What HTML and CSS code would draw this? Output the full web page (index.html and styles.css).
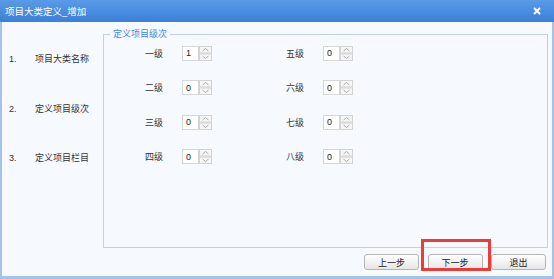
FILE: index.html
```html
<!DOCTYPE html>
<html lang="zh-CN">
<head>
    <meta charset="UTF-8">
    <title>项目大类定义_增加</title>
    <link rel="stylesheet" href="styles.css">
</head>
<body>
    <div class="window">
        <!-- Title bar -->
        <div class="titlebar">
            <span class="title">项目大类定义_增加</span>
            <svg class="close" width="8" height="8" viewBox="0 0 8 8"><path d="M1 1 L7 7 M7 1 L1 7" stroke="#fff" stroke-width="2"/></svg>
        </div>

        <div class="content">
            <!-- Wizard steps -->
            <ol class="steps">
                <li><span class="num">1.</span><span>项目大类名称</span></li>
                <li><span class="num">2.</span><span>定义项目级次</span></li>
                <li><span class="num">3.</span><span>定义项目栏目</span></li>
            </ol>

            <!-- Levels -->
            <fieldset class="levels">
                <legend>定义项目级次</legend>
                <div class="grid">
                    <div class="level"><label>一级</label><input type="text" value="1"><svg class="arrows" width="13" height="15" viewBox="0 0 13 15"><rect x="0.5" y="0.5" width="12" height="6.5" fill="#f6f6f6" stroke="#d2d2d2"/><rect x="0.5" y="8" width="12" height="6.5" fill="#f6f6f6" stroke="#d2d2d2"/><path d="M3.5 5 L6.5 2.5 L9.5 5 M3.5 10 L6.5 12.5 L9.5 10" fill="none" stroke="#999" stroke-width="0.8"/></svg></div>
                    <div class="level"><label>二级</label><input type="text" value="0"><svg class="arrows" width="13" height="15" viewBox="0 0 13 15"><rect x="0.5" y="0.5" width="12" height="6.5" fill="#f6f6f6" stroke="#d2d2d2"/><rect x="0.5" y="8" width="12" height="6.5" fill="#f6f6f6" stroke="#d2d2d2"/><path d="M3.5 5 L6.5 2.5 L9.5 5 M3.5 10 L6.5 12.5 L9.5 10" fill="none" stroke="#999" stroke-width="0.8"/></svg></div>
                    <div class="level"><label>三级</label><input type="text" value="0"><svg class="arrows" width="13" height="15" viewBox="0 0 13 15"><rect x="0.5" y="0.5" width="12" height="6.5" fill="#f6f6f6" stroke="#d2d2d2"/><rect x="0.5" y="8" width="12" height="6.5" fill="#f6f6f6" stroke="#d2d2d2"/><path d="M3.5 5 L6.5 2.5 L9.5 5 M3.5 10 L6.5 12.5 L9.5 10" fill="none" stroke="#999" stroke-width="0.8"/></svg></div>
                    <div class="level"><label>四级</label><input type="text" value="0"><svg class="arrows" width="13" height="15" viewBox="0 0 13 15"><rect x="0.5" y="0.5" width="12" height="6.5" fill="#f6f6f6" stroke="#d2d2d2"/><rect x="0.5" y="8" width="12" height="6.5" fill="#f6f6f6" stroke="#d2d2d2"/><path d="M3.5 5 L6.5 2.5 L9.5 5 M3.5 10 L6.5 12.5 L9.5 10" fill="none" stroke="#999" stroke-width="0.8"/></svg></div>
                    <div class="level"><label>五级</label><input type="text" value="0"><svg class="arrows" width="13" height="15" viewBox="0 0 13 15"><rect x="0.5" y="0.5" width="12" height="6.5" fill="#f6f6f6" stroke="#d2d2d2"/><rect x="0.5" y="8" width="12" height="6.5" fill="#f6f6f6" stroke="#d2d2d2"/><path d="M3.5 5 L6.5 2.5 L9.5 5 M3.5 10 L6.5 12.5 L9.5 10" fill="none" stroke="#999" stroke-width="0.8"/></svg></div>
                    <div class="level"><label>六级</label><input type="text" value="0"><svg class="arrows" width="13" height="15" viewBox="0 0 13 15"><rect x="0.5" y="0.5" width="12" height="6.5" fill="#f6f6f6" stroke="#d2d2d2"/><rect x="0.5" y="8" width="12" height="6.5" fill="#f6f6f6" stroke="#d2d2d2"/><path d="M3.5 5 L6.5 2.5 L9.5 5 M3.5 10 L6.5 12.5 L9.5 10" fill="none" stroke="#999" stroke-width="0.8"/></svg></div>
                    <div class="level"><label>七级</label><input type="text" value="0"><svg class="arrows" width="13" height="15" viewBox="0 0 13 15"><rect x="0.5" y="0.5" width="12" height="6.5" fill="#f6f6f6" stroke="#d2d2d2"/><rect x="0.5" y="8" width="12" height="6.5" fill="#f6f6f6" stroke="#d2d2d2"/><path d="M3.5 5 L6.5 2.5 L9.5 5 M3.5 10 L6.5 12.5 L9.5 10" fill="none" stroke="#999" stroke-width="0.8"/></svg></div>
                    <div class="level"><label>八级</label><input type="text" value="0"><svg class="arrows" width="13" height="15" viewBox="0 0 13 15"><rect x="0.5" y="0.5" width="12" height="6.5" fill="#f6f6f6" stroke="#d2d2d2"/><rect x="0.5" y="8" width="12" height="6.5" fill="#f6f6f6" stroke="#d2d2d2"/><path d="M3.5 5 L6.5 2.5 L9.5 5 M3.5 10 L6.5 12.5 L9.5 10" fill="none" stroke="#999" stroke-width="0.8"/></svg></div>
                </div>
            </fieldset>
        </div>

        <!-- Footer buttons -->
        <div class="footer">
            <button type="button">上一步</button>
            <button type="button" class="marked">下一步</button>
            <button type="button">退出</button>
        </div>
    </div>
</body>
</html>
```

FILE: styles.css
```css
body {
    margin: 0;
    font-family: "Liberation Sans", "Noto Sans CJK SC", sans-serif;
    font-size: 9px;
    color: #333;
    background: #f6f9fe;
}

.window {
    width: 554px;
    height: 279px;
    box-sizing: border-box;
    display: flex;
    flex-direction: column;
    background: #f6f9fe;
    border-left: 2px solid #a6c2ea;
    border-right: 2px solid #a6c2ea;
    border-bottom: 3px solid #a6c2ea;
}

.titlebar {
    height: 22px;
    margin: 0 -2px;
    padding: 0 13px 0 5px;
    display: flex;
    align-items: center;
    justify-content: space-between;
    background: linear-gradient(#5a9be7, #3b7fd8);
    color: white;
    font-size: 9.5px;
}

.content {
    flex: 1;
    display: flex;
    padding-top: 6px;
}

.steps {
    width: 101px;
    margin: 0;
    padding: 25px 0 0 7px;
    box-sizing: border-box;
    list-style: none;
    display: flex;
    flex-direction: column;
    gap: 37.5px;
}

.steps li {
    display: flex;
    line-height: 12px;
}

.steps .num {
    width: 26px;
}

.levels {
    width: 445px;
    height: 220px;
    box-sizing: border-box;
    margin: 0;
    padding: 5px 0 0 41px;
    border: 1px solid #bdd1ec;
}

.levels legend {
    margin-left: -35px;
    padding: 0 3px;
    line-height: 12px;
    color: #3d8ae2;
}

.grid {
    display: grid;
    grid-template-columns: 141px 141px;
    grid-template-rows: repeat(4, 16px);
    grid-auto-flow: column;
    row-gap: 18.5px;
}

.level {
    display: flex;
    align-items: center;
}

.level label {
    width: 37px;
}

.level input {
    width: 17px;
    height: 15px;
    box-sizing: border-box;
    margin: 0;
    padding: 0 0 0 3px;
    border: 1px solid #d6d6d6;
    background: white;
    font: inherit;
    color: #222;
}

.arrows {
    display: block;
}

.footer {
    height: 27px;
    display: flex;
    justify-content: flex-end;
    gap: 8.5px;
    padding: 5px 6px 0 0;
    box-sizing: border-box;
}

.footer button {
    width: 55px;
    height: 16px;
    padding: 0;
    font: inherit;
    color: #222;
    border: 1px solid #b4b4b4;
    border-radius: 3px;
    background: linear-gradient(#ffffff, #e6e6e6);
}

.marked {
    position: relative;
}

.marked::after {
    content: "";
    position: absolute;
    left: -8px;
    top: -16px;
    width: 64px;
    height: 26px;
    border: 3px solid #ef3a3a;
}
```
